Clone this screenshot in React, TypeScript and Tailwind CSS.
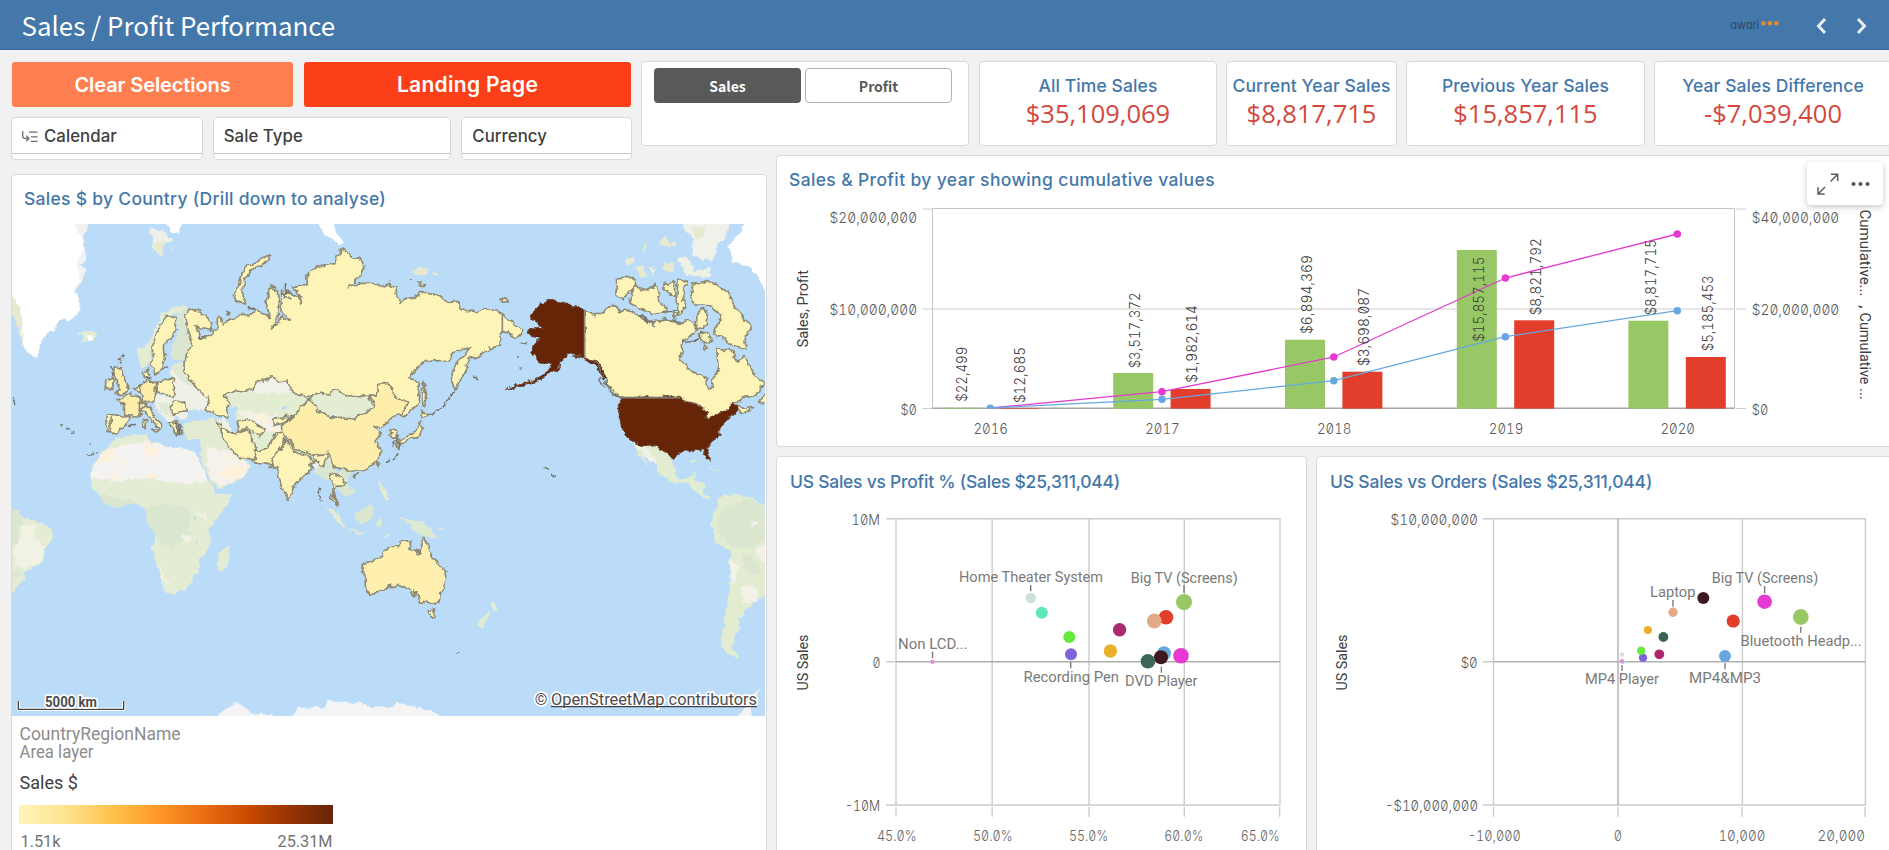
import React from "react";

const NUM = { fontFamily: "Inter, sans-serif", fontFeatureSettings: '"zero" 1, "tnum" 1' };
const LABEL = { fontFamily: "Roboto, sans-serif" };

type TProps = {
  x: number;
  y: number;
  w: number;
  s?: number;
  c?: string;
  rot?: number;
  num?: boolean;
  weight?: number;
  children: string;
};

/* Chart text: x is the left edge, y the baseline, w the drawn width. */
function T({ x, y, w, s = 14.7, c = "#595959", rot = 0, num = false, weight = 300, children }: TProps) {
  return (
    <text
      x={x}
      y={y}
      fontSize={s}
      fill={c}
      fontWeight={weight}
      textLength={w}
      lengthAdjust="spacingAndGlyphs"
      transform={rot ? `rotate(${rot} ${x} ${y})` : undefined}
      style={num ? NUM : LABEL}
    >
      {children}
    </text>
  );
}

const card = "rounded-[4px] border border-[#d9d9d9] bg-white";
const heading = "whitespace-nowrap font-['Inter'] font-medium text-[#4477aa]";

function Header() {
  return (
    <header className="flex h-[50px] shrink-0 items-center border-b border-[#38689a] bg-[#4477aa] pl-[21.5px] pr-[17px]">
      <h1 className="whitespace-nowrap font-['Noto_Sans_CJK_SC',sans-serif] text-[25.9px] font-normal leading-[48px] text-white">
        Sales / Profit Performance
      </h1>
      <svg className="ml-auto" width="50" height="20" viewBox="0 0 50 20">
        <text x="0.5" y="14" fontSize="12.5" fill="#27394f" textLength="28.5" lengthAdjust="spacingAndGlyphs" style={{ fontFamily: "Inter", fontWeight: 300 }}>
          ɑwɑri
        </text>
        <circle cx="33.5" cy="8.3" r="2.3" fill="#e58a2c" />
        <circle cx="40" cy="8.3" r="2.3" fill="#e58a2c" />
        <circle cx="46.3" cy="8.3" r="2.3" fill="#e58a2c" />
      </svg>
      <svg className="ml-[32px]" width="20" height="20" viewBox="0 0 20 20" fill="none" stroke="#e8edf3" strokeWidth="3">
        <path d="M13 4 L6.5 11 L13 18" />
      </svg>
      <svg className="ml-[20px]" width="20" height="20" viewBox="0 0 20 20" fill="none" stroke="#e8edf3" strokeWidth="3">
        <path d="M6 4 L12.5 11 L6 18" />
      </svg>
    </header>
  );
}

function Filter({ label, width, icon }: { label: string; width: string; icon?: boolean }) {
  return (
    <div className={`${card} ${width} flex h-[43px] flex-col`}>
      <div className="flex h-[36px] items-center border-b border-[#c4c4c4] pl-[10px]">
        {icon && (
          <svg className="mr-[6px] mt-[2px]" width="16" height="12" viewBox="0 0 16 12" fill="none" stroke="#6b6b6b" strokeWidth="1.3">
            <path d="M0.7 0 V4.5 Q0.7 7.5 3.5 7.5 H6 M4.2 4.6 L7 7.5 L4.2 10.4 M7 1.2 H15.5 M9 5.8 H15.5 M9 10.4 H15.5" />
          </svg>
        )}
        <span className="whitespace-nowrap pt-[3px] font-['Inter'] text-[16.8px] font-medium tracking-[0.05px] text-[#404040]">{label}</span>
      </div>
    </div>
  );
}

function Kpi({ title, value, width }: { title: string; value: string; width: string }) {
  return (
    <div className={`${card} ${width} flex h-[85px] shrink-0 flex-col items-center pt-[12px]`}>
      <div className={`${heading} text-[17.5px] leading-[24px] tracking-[0.1px]`}>{title}</div>
      <div className="whitespace-nowrap font-['Open_Sans'] text-[25.5px] leading-[31px] text-[#d4483d]">{value}</div>
    </div>
  );
}

const Y = "#fff4b8";
const O = "#feeeac";

const basemap: [string, string][] = [
  ["#ffffff", "M20 10 L272 10 L262 45 L245 65 L252 100 L262 125 L242 150 L262 170 L245 205 L225 225 L240 260 L235 300 L205 315 L178 318 L150 350 L128 368 L110 432 L90 415 L72 400 L60 350 L50 290 L20 235Z"],
  ["#f2f1f1", "M225 27 H270 L245 65 L252 100 L262 125 L242 150 L262 170 L245 205 L215 225 L238 200 L232 150 L248 110 L245 60Z"],
  ["#e8e9cf", "M30 235 L50 260 L66 300 L66 350 L72 400 L60 360 L30 270Z"],
  ["#eef0e8", "M450 40 L490 45 L515 75 L495 90 L480 130 L460 95Z"],
  ["#e8e9cf", "M460 85 L495 80 L480 130Z M515 90 L528 108 L516 100Z"],
  ["#ffffff", "M497 10 L547 10 L540 55 L515 58Z M952 10 L1000 10 L1010 60 L1035 80 L1015 92 L1000 70 L970 55Z"],
  ["#e3ecd2", "M230 352 L268 345 L294 358 L282 378 L250 380 L245 362Z"],
  ["#ffffff", "M262 362 L280 360 L282 375 L265 376Z"],
  ["#e3ecd2", "M410 405 L440 390 L465 340 L490 290 L550 268 L568 285 L510 300 L480 325 L455 390 L450 440 L430 458 L412 440Z"],
  ["#dae6d0", "M515 425 L520 390 L532 360 L528 300 L560 280 L578 390 L558 425 L525 435Z"],
  ["#eff1e6", "M455 535 L500 545 L525 535 L515 495 L512 455 L545 438 L570 480 L590 515 L635 545 L612 590 L585 578 L560 592 L560 610 L540 614 L520 600 L520 625 L545 655 L520 640 L490 605 L460 570Z"],
  ["#dfe9d3", "M512 455 L545 440 L565 480 L590 520 L560 510 L530 480Z M470 570 L510 560 L515 600 L495 600Z"],
  ["#e3ecd2", "M548 628 L580 615 L620 620 L645 612 L700 630 L760 660 L760 700 L715 715 L750 752 L735 785 L700 805 L652 822 L640 805 L610 755 L600 705 L605 672 L565 672 L550 650Z"],
  ["#f4f2ea", "M620 700 L690 710 L745 750 L735 785 L700 800 L655 815 L625 770Z"],
  ["#fdf1dc", "M660 775 L690 750 L745 755 L720 785 L670 795Z M680 715 L710 730 L690 735Z"],
  ["#e4edd3", "M330 690 L345 670 L385 662 L440 658 L445 675 L500 692 L530 705 L580 705 L590 720 L605 770 L630 800 L648 838 L695 833 L690 858 L655 905 L625 945 L632 990 L600 1035 L598 1065 L580 1085 L570 1110 L550 1130 L495 1138 L485 1100 L470 1050 L455 1000 L467 970 L460 950 L437 915 L440 880 L410 865 L350 875 L320 870 L290 835 L275 820 L275 770 L295 730 L320 695Z"],
  ["#f4f3f1", "M275 770 L300 725 L330 698 L440 678 L500 695 L585 710 L612 765 L625 795 L560 810 L480 795 L400 788 L340 800 L275 792Z"],
  ["#fdf1dc", "M280 750 L320 700 L350 710 L340 735 L290 745Z M350 730 L380 740 L370 750Z M430 685 L470 700 L480 725 L455 715 L460 745 L435 715Z M300 770 L365 790 L340 795Z M440 775 L480 780 L450 800Z M468 1045 L490 1080 L510 1100 L485 1095Z"],
  ["#dae6d0", "M440 880 L475 868 L540 870 L572 885 L560 960 L520 1000 L480 985 L460 950 L437 915Z M300 835 L345 850 L390 850 L410 865 L350 875 L310 865Z"],
  ["#f2f1e6", "M575 890 L610 895 L625 920 L600 900Z M540 965 L560 955 L575 975 L550 980Z M490 1085 L512 1100 L500 1112Z"],
  ["#badcf8", "M582 905 L592 902 L590 920 L582 918Z M560 945 L566 960 L562 965Z M592 968 L596 985 L592 985Z"],
  ["#e3ecd2", "M690 988 L688 1030 L670 1070 L652 1060 L655 1015Z"],
  ["#e4edd3", "M20 873 L60 885 L65 905 L125 922 L158 945 L158 970 L135 1000 L130 1045 L75 1070 L70 1095 L50 1120 L20 1155Z"],
  ["#f1f1e4", "M60 925 L110 930 L105 965 L135 1000 L125 1045 L80 1060 L45 1050 L40 1000 L65 970Z"],
  ["#dae6d0", "M20 873 L60 885 L70 920 L50 960 L55 990 L20 980Z M30 1065 L70 1075 L50 1090Z"],
  ["#e2edd2", "M675 535 L760 500 L820 484 L925 545 L885 600 L850 660 L820 690 L765 712 L745 650 L705 620 L705 590 L690 575 L672 560Z"],
  ["#f1f1e8", "M762 503 L815 487 L860 500 L880 535 L820 532 L780 540 L760 528Z M705 585 L760 590 L830 600 L845 640 L800 650 L745 612Z M655 612 L695 620 L700 650 L665 640Z"],
  ["#fdf1dc", "M760 600 L790 598 L810 625 L780 620Z M810 638 L845 640 L835 660Z"],
  ["#badcf8", "M682 582 L712 575 L706 600 L714 625 L720 648 L700 656 L686 630Z M838 582 L865 575 L850 590Z"],
  ["#e2edd3", "M930 545 L1000 522 L1050 545 L1105 540 L1125 570 L1060 615 L1000 608 L948 590Z M880 700 L930 722 L935 735 L885 715Z"],
  ["#f1f1ea", "M975 595 L1010 598 L1030 610 L1000 606Z"],
  ["#dae6d0", "M932 735 L990 712 L1005 765 L1050 768 L1042 800 L1065 832 L1045 845 L1020 830 L1000 805 L985 790 L965 795 L940 760Z"],
  ["#f1f1ea", "M932 735 L958 742 L950 765 L938 755Z"],
  ["#e3ecd2", "M975 873 L1000 880 L1042 940 L1020 930 L1000 905Z M1040 945 L1090 950 L1088 957 L1045 952Z M1128 920 L1145 910 L1140 940 L1130 930Z M1135 790 L1145 800 L1160 830 L1170 855 L1155 862 L1150 835Z M1155 965 L1180 955 L1160 972Z M875 853 L890 858 L884 868Z"],
  ["#dae6d0", "M1060 900 L1110 867 L1124 880 L1110 915 L1085 928Z"],
  ["#dee9d1", "M1190 905 L1215 912 L1270 922 L1290 945 L1315 968 L1280 962 L1250 955 L1230 930Z M1312 940 L1335 938 L1320 945Z"],
  ["#e3ecd2", "M1475 1160 L1492 1168 L1486 1190 L1474 1185Z M1425 1230 L1465 1190 L1470 1197 L1445 1238Z"],
  ["#f4f4f4", "M640 1510 L680 1480 L715 1463 L745 1490 L815 1500 L815 1515 L640 1515Z M870 1515 L895 1480 L975 1475 L985 1453 L1050 1465 L1080 1460 L1110 1480 L1170 1475 L1200 1465 L1290 1485 L1335 1515Z M2205 1515 L2235 1480 L2255 1440 L2287 1420 L2262 1452 L2250 1515Z"],
  ["#e2ecd1", "M2155 853 L2170 837 L2240 842 L2310 878 L2310 1137 L2270 1155 L2240 1185 L2215 1215 L2225 1235 L2205 1270 L2195 1300 L2218 1325 L2200 1328 L2175 1310 L2163 1280 L2170 1230 L2180 1180 L2190 1100 L2195 1040 L2190 1010 L2150 980 L2130 930 L2145 890Z"],
  ["#dae6d0", "M2160 890 L2240 850 L2310 878 L2310 960 L2260 1000 L2210 1000 L2165 970 L2145 930Z M2225 1010 L2270 1040 L2280 1080 L2240 1070Z"],
  ["#f3f1e8", "M2190 1035 L2215 1050 L2205 1110 L2192 1100Z M2225 1110 L2275 1120 L2270 1165 L2230 1160Z M2265 1000 L2310 985 L2310 1060 L2275 1030Z M2250 918 L2270 920 L2262 932Z"],
  ["#e2ecd1", "M1900 688 L1970 690 L1990 710 L2018 735 L2025 775 L2040 790 L2068 788 L2088 768 L2082 795 L2110 805 L2110 835 L2135 852 L2120 855 L2090 830 L2060 805 L2010 800 L1975 775 L1960 740 L1930 715 L1945 755 L1920 720Z M2060 735 L2095 740 L2080 745Z M2125 755 L2160 770 L2140 768Z"],
  ["#f1f2e8", "M1905 690 L1940 700 L1965 735 L1985 770 L1960 745Z"],
  ["#f1f1ec", "M2030 10 L2200 10 L2180 60 L2150 90 L2140 140 L2110 135 L2080 120 L2075 70Z"],
  ["#e8eacf", "M2075 40 L2110 30 L2120 60 L2090 80Z M1980 80 L1995 58 L2010 90 L1990 95Z M1868 140 L1905 120 L1890 150Z M1905 155 L1930 150 L1940 180 L1920 185Z M1985 145 L2020 140 L2020 170 L1990 172Z M1930 110 L1942 75 L1940 105Z M2010 85 L2030 85 L2025 95Z"],
  ["#eef1e4", "M2030 130 L2060 125 L2075 150 L2095 185 L2060 180 L2050 160Z M2075 170 L2130 160 L2130 185 L2080 185Z M1950 155 L1970 160 L1960 180Z"],
  ["#ffffff", "M2310 10 L2230 10 L2225 50 L2185 90 L2200 140 L2245 150 L2280 190 L2290 215 L2310 240Z"],
  ["#e6e9cd", "M1240 165 L1262 155 L1286 165 L1280 180 L1245 182Z M1295 170 L1322 178 L1300 182Z"],
];

const countries: [string, string][] = [
  [Y, "M557 300 L575 283 L600 288 L635 320 L632 345 L605 340 L583 332 L598 350 L600 372 L625 365 L640 345 L655 345 L655 310 L665 310 L668 330 L690 312 L730 300 L755 300 L765 285 L795 295 L808 308 L798 260 L812 222 L832 225 L835 270 L830 318 L818 338 L838 325 L845 300 L868 318 L860 298 L843 290 L845 225 L870 235 L895 245 L900 270 L902 245 L880 215 L922 205 L920 180 L950 155 L985 150 L1010 145 L1015 118 L1032 102 L1050 128 L1080 130 L1092 155 L1075 190 L1045 218 L1085 205 L1120 205 L1145 218 L1165 205 L1188 215 L1190 245 L1200 265 L1220 250 L1255 245 L1265 230 L1305 235 L1320 245 L1350 260 L1380 265 L1385 285 L1430 290 L1450 280 L1490 285 L1510 298 L1550 335 L1568 350 L1550 370 L1530 355 L1507 350 L1500 370 L1500 392 L1470 400 L1440 420 L1405 430 L1400 465 L1380 500 L1362 525 L1353 480 L1370 445 L1400 415 L1412 395 L1390 405 L1365 408 L1345 435 L1300 438 L1270 440 L1225 490 L1258 500 L1255 565 L1215 605 L1205 597 L1225 562 L1190 550 L1165 505 L1140 508 L1130 540 L1105 540 L1075 545 L1050 545 L1020 530 L995 525 L990 540 L960 535 L925 550 L910 540 L880 535 L860 495 L845 500 L815 485 L765 503 L760 525 L720 530 L705 525 L675 540 L685 560 L680 580 L680 612 L655 600 L615 582 L630 550 L585 515 L565 480 L552 470 L553 430 L575 390 L565 355Z"],
  [Y, "M700 240 L720 200 L735 160 L770 140 L805 120 L808 135 L765 160 L735 190 L725 230 L738 268 L710 260Z"],
  [Y, "M1270 500 L1275 530 L1280 550 L1270 572 L1266 540Z M680 292 L692 292 L686 300Z M1500 255 L1512 248 L1522 258 L1505 262Z M1255 200 L1278 210 L1262 214Z M815 213 L828 215 L820 218Z"],
  [Y, "M455 395 L480 330 L505 298 L527 310 L525 350 L490 395 L493 430 L480 470 L465 480 L452 445 L460 420Z"],
  [O, "M345 450 L358 455 L362 470 L375 495 L387 520 L375 535 L345 535 L358 520 L350 500 L345 480Z"],
  [Y, "M318 495 L340 490 L338 520 L315 525Z M470 500 L520 490 L525 535 L515 545 L472 530Z M510 575 L525 558 L553 562 L563 590 L520 595Z"],
  [O, "M350 555 L390 535 L425 555 L415 575 L422 603 L375 602 L372 570Z"],
  [Y, "M322 600 L335 598 L390 608 L375 635 L345 657 L325 652 L320 625Z M335 605 L330 650"],
  [O, "M422 510 L445 495 L470 500 L468 535 L460 560 L430 560 L420 530Z"],
  [Y, "M430 470 L445 463 L445 490 L433 490Z M400 522 L420 506 L418 530Z M415 565 L440 565 L438 580 L418 580Z M420 585 L450 575 L460 605 L485 630 L480 645 L455 615 L435 595Z M430 615 L440 612 L438 637 L430 635Z M455 645 L475 645 L470 656Z"],
  [Y, "M506 625 L530 618 L535 635 L548 660 L525 655 L520 640Z"],
  [Y, "M652 618 L668 628 L665 640 L700 658 L745 645 L765 700 L770 738 L720 725 L700 710 L680 690 L665 660Z"],
  [Y, "M710 622 L745 608 L795 645 L780 665 L745 640 L715 650Z M820 610 L880 602 L850 625 L820 632Z"],
  [Y, "M765 710 L800 700 L830 655 L855 655 L850 690 L815 735 L820 755 L770 740Z"],
  [Y, "M855 670 L875 695 L885 710 L930 730 L945 740 L930 742 L935 765 L885 805 L880 835 L865 852 L845 820 L832 760 L820 755 L815 730 L845 700Z M940 722 L985 712 L968 755 L950 738Z"],
  [O, "M845 635 L885 600 L925 552 L945 570 L950 590 L1000 605 L1060 612 L1110 585 L1125 570 L1105 545 L1132 540 L1130 510 L1165 505 L1190 550 L1225 562 L1205 597 L1180 605 L1150 630 L1120 637 L1145 655 L1128 675 L1142 705 L1130 740 L1090 765 L1040 765 L1000 755 L985 715 L930 722 L885 700 L860 665 L845 655Z"],
  [Y, "M990 780 L1005 773 L1040 805 L1008 815 L1000 845 L1015 865 L995 855 L1000 815Z"],
  [Y, "M1172 645 L1185 643 L1190 668 L1175 670Z M1133 740 L1140 742 L1134 758Z M1060 778 L1072 776 L1066 785Z"],
  [O, "M1265 588 L1288 598 L1262 612Z M1258 620 L1268 640 L1260 662 L1215 682 L1195 682 L1190 675 L1235 660 L1250 645Z M1190 685 L1205 690 L1195 702Z"],
  ["#fff0b0", "M1090 1045 L1140 1030 L1150 1010 L1175 990 L1195 995 L1200 980 L1235 977 L1230 1000 L1260 1015 L1265 990 L1270 963 L1285 995 L1295 1025 L1320 1050 L1338 1070 L1340 1090 L1320 1140 L1318 1160 L1290 1167 L1260 1160 L1245 1130 L1240 1145 L1215 1112 L1170 1115 L1110 1138 L1100 1130 L1098 1090 L1088 1070Z M1285 1185 L1307 1182 L1302 1207 L1293 1205Z"],
  [Y, "M1752 285 L1780 300 L1800 295 L1840 270 L1860 290 L1880 285 L1915 300 L1935 310 L1960 320 L2000 315 L2040 325 L2065 315 L2085 325 L2090 345 L2075 355 L2050 380 L2040 430 L2070 465 L2120 490 L2124 522 L2137 520 L2139 490 L2155 470 L2150 400 L2195 405 L2214 440 L2234 425 L2256 470 L2292 505 L2278 535 L2235 547 L2205 565 L2175 590 L2120 612 L2118 590 L2100 568 L2040 555 L2040 548 L1870 548 L1840 535 L1822 510 L1818 480 L1790 440 L1752 428Z"],
  [Y, "M2272 562 L2294 538 L2312 545 L2312 564Z M2208 575 L2258 578 L2225 598Z M1850 188 L1900 188 L1908 210 L1870 255 L1848 240Z M1902 215 L1945 225 L1968 208 L1980 260 L2005 290 L1960 300 L1890 265Z M1995 205 L2022 198 L2025 245 L1995 225Z M2035 195 L2062 195 L2050 240 L2055 280 L2035 300 L2030 240Z M2075 210 L2100 200 L2150 205 L2186 235 L2206 280 L2256 335 L2236 365 L2236 405 L2180 378 L2145 360 L2155 320 L2165 300 L2120 270 L2085 270 L2072 235Z M2090 300 L2110 280 L2125 300 L2110 340 L2090 345Z M2095 360 L2120 350 L2135 380 L2100 380Z M2020 290 L2035 300 L2022 310Z M2110 390 L2122 398 L2112 404Z"],
];

const usShapes =
  "M1752 283 L1695 265 L1655 253 L1620 265 L1605 290 L1588 303 L1610 325 L1625 340 L1590 342 L1585 352 L1600 365 L1625 370 L1600 390 L1592 410 L1610 430 L1620 445 L1655 445 L1640 475 L1600 495 L1515 523 L1560 515 L1630 488 L1665 465 L1672 458 L1680 440 L1692 430 L1700 415 L1720 420 L1752 428Z M1752 426 L1792 438 L1822 485 L1810 492 L1785 455Z M1865 550 L2038 548 L2060 560 L2100 570 L2120 590 L2118 612 L2145 600 L2175 590 L2200 565 L2212 580 L2210 590 L2180 615 L2160 640 L2160 660 L2128 690 L2120 700 L2132 735 L2122 735 L2110 705 L2060 708 L2035 715 L2020 734 L2000 712 L1985 708 L1970 692 L1930 695 L1900 685 L1875 660 L1858 620 L1858 560Z M1662 468 L1682 450 L1675 470Z";

function WorldMap() {
  return (
    <svg className="block" width="753" height="492" viewBox="36 27 2259 1476">
      <defs>
        <filter id="coast" x="0" y="0" width="2330" height="1530" filterUnits="userSpaceOnUse" colorInterpolationFilters="sRGB">
          <feTurbulence type="fractalNoise" baseFrequency="0.045" numOctaves="3" seed="7" result="n" />
          <feDisplacementMap in="SourceGraphic" in2="n" scale="20" xChannelSelector="R" yChannelSelector="G" />
        </filter>
      </defs>
      <rect x="36" y="27" width="2259" height="1476" fill="#badcf8" />
      <g filter="url(#coast)">
        {basemap.map(([fill, d], i) => (
          <path key={i} d={d} fill={fill} />
        ))}
        <g stroke="#8d8972" strokeWidth="5" strokeLinejoin="round">
          {countries.map(([fill, d], i) => (
            <path key={i} d={d} fill={fill} />
          ))}
          <path d={usShapes} fill="#662506" stroke="#6d4a38" strokeWidth="3" />
        </g>
        <g fill="none" stroke="#75766d" strokeWidth="5" strokeLinecap="round">
          <path d="M1292 600 L1330 575 L1345 555 L1362 530" strokeDasharray="14 7" />
          <path d="M335 455 L345 465 M340 470 L342 485 M358 440 L362 436 M370 428 L372 420 M440 485 L450 488 M488 462 L498 456 M525 625 L545 632 M535 640 L548 650 M540 628 L530 660 M528 632 L540 660" />
          <path d="M850 212 L860 232 L856 250 M862 225 L880 240 M848 235 L870 250 M600 365 L615 372 M745 275 L760 285" />
          <path d="M183 632 H186 M197 640 L207 642 M218 650 H221 M271 685 H273 M262 720 L278 718 M287 716 L292 714 M385 636 L405 628 M38 545 L44 568" />
          <path d="M958 820 V835 M960 842 V850 M966 858 V860 M1630 760 L1645 766 M1655 775 L1662 782 M1558 382 L1576 386 M1550 424 H1554 M1418 486 L1430 490 M1566 462 H1568 M1180 735 L1190 720 M1232 195 L1236 198 M1198 678 L1200 700 M1180 690 L1195 660 M1160 742 L1168 738 M1374 1315 H1376" />
          <path d="M1785 440 L1812 485 M1800 490 L1812 515 M1815 500 L1825 520 L1860 550" />
          <path d="M1915 300 L1955 322 L1960 335 M1990 310 L2040 320 M2070 380 L2095 375 L2110 350 M1985 290 L2030 285 M2050 375 L2070 382" strokeWidth="4" />
        </g>
      </g>
      <path d="M1752 287 H1746 V426 H1752Z M1868 549 V556 H2036 V549Z" fill="#662506" />
      <path d="M1507 297 V352 M1754 287 V428" stroke="#8a8a80" strokeWidth="5" fill="none" />
      <path d="M1866 548 H2040" stroke="#7b7465" strokeWidth="6" />
      <g style={LABEL} stroke="#ffffff" strokeWidth="10" paintOrder="stroke" strokeLinejoin="round" fill="#4d4d4d">
        <path d="M55 1458 V1483 H371 V1458" fill="none" />
        <path d="M55 1458 V1483 H371 V1458" fill="none" stroke="#404040" strokeWidth="4" />
        <text x="135" y="1476" fontSize="42" fontWeight="700" textLength="156" lengthAdjust="spacingAndGlyphs">5000 km</text>
        <text x="1604" y="1469" fontSize="48" textLength="38" lengthAdjust="spacingAndGlyphs">©</text>
        <text x="1653" y="1469" fontSize="48" textLength="618" lengthAdjust="spacingAndGlyphs">OpenStreetMap contributors</text>
        <path d="M1653 1475 H2271" stroke="#404040" strokeWidth="3.5" />
      </g>
    </svg>
  );
}

function MapCard() {
  return (
    <section className={`${card} mt-[19px] h-[720px] w-[756px] shrink-0`}>
      <h2 className={`${heading} h-[49px] pl-[12px] pt-[11px] text-[17.5px] leading-[26px] tracking-[0.28px]`}>
        Sales $ by Country (Drill down to analyse)
      </h2>
      <WorldMap />
      <svg className="block" width="340" height="140" viewBox="12 716 340 140">
        <defs>
          <linearGradient id="ramp">
            <stop offset="0" stopColor="#fff5b8" />
            <stop offset="0.15" stopColor="#fee391" />
            <stop offset="0.29" stopColor="#fec44f" />
            <stop offset="0.44" stopColor="#fe9929" />
            <stop offset="0.58" stopColor="#ec7014" />
            <stop offset="0.72" stopColor="#cc4c02" />
            <stop offset="0.86" stopColor="#993404" />
            <stop offset="1" stopColor="#662506" />
          </linearGradient>
        </defs>
        <T x={19.5} y={740} w={161} s={18} c="#8c8c8c" weight={400}>CountryRegionName</T>
        <T x={19.5} y={758} w={74} s={18} c="#8c8c8c" weight={400}>Area layer</T>
        <T x={19.5} y={789} w={58.5} s={18.5} c="#404040" weight={400}>Sales $</T>
        <rect x="19" y="805" width="314" height="19" fill="url(#ramp)" />
        <T x={20.5} y={846.7} w={40} s={17} c="#737373" weight={400}>1.51k</T>
        <T x={277.5} y={846.7} w={55} s={17} c="#737373" weight={400}>25.31M</T>
      </svg>
    </section>
  );
}

const bars = [
  { year: "2016", x: 941.5, s: 407.8, p: 407.9 },
  { year: "2017", x: 1113.2, s: 373, p: 389 },
  { year: "2018", x: 1285, s: 339.7, p: 371.7 },
  { year: "2019", x: 1456.8, s: 250, p: 320.3 },
  { year: "2020", x: 1628.4, s: 320.7, p: 357 },
];
const cumulativeSales = [[990.3, 408], [1162, 391.7], [1333.8, 357], [1505.4, 278], [1677.3, 234]];
const cumulativeProfit = [[990.3, 408], [1162, 399.3], [1333.8, 380.7], [1505.4, 336.7], [1677.3, 310.7]];
const barLabels: [string, number, number, number][] = [
  ["$22,499", 967.5, 401.7, 55],
  ["$12,685", 1025, 403, 56],
  ["$3,517,372", 1139.6, 368.3, 76],
  ["$1,982,614", 1196.8, 382.7, 77.5],
  ["$6,894,369", 1311.8, 334, 79],
  ["$3,698,087", 1368.6, 366, 78],
  ["$15,857,115", 1484, 341.7, 85],
  ["$8,821,792", 1540.6, 315.3, 77],
  ["$8,817,715", 1655.6, 315.3, 76],
  ["$5,185,453", 1713, 351.3, 76],
];

function ComboChart() {
  return (
    <section className={`${card} relative h-[292px] w-[1130px] shrink-0`}>
      <h2 className={`${heading} h-[45px] pl-[12px] pt-[11px] text-[17.5px] leading-[26px] tracking-[0.36px]`}>
        Sales &amp; Profit by year showing cumulative values
      </h2>
      <svg className="block" width="1111" height="245" viewBox="777 201 1111 245">
        <g stroke="#cccccc" fill="none">
          <path d="M922.5 209 H932.5 M922.5 309 H932.5 M922.5 408.5 H932.5 M1736 209 H1746 M1736 309 H1746 M1736 408.5 H1746" />
          <path d="M932.5 309 H1734.5" />
          <path d="M932.5 408 V208.5 H1734.5 V408" stroke="#c4c4c4" />
          <path d="M932.5 408.3 H1734.5" stroke="#a6a6a6" strokeWidth="1.5" />
        </g>
        {bars.map((b) => (
          <g key={b.year}>
            <rect x={b.x} y={b.s} width="40" height={408.6 - b.s} fill="#98c866" />
            <rect x={b.x + 57.4} y={b.p} width="40" height={408.6 - b.p} fill="#e23e2b" />
            <T x={b.x + 32} y={434} w={34.5} num>{b.year}</T>
          </g>
        ))}
        <polyline points={cumulativeSales.join(" ")} fill="none" stroke="#e539d1" strokeWidth="1.3" />
        <polyline points={cumulativeProfit.join(" ")} fill="none" stroke="#66a8de" strokeWidth="1.3" />
        {cumulativeSales.slice(1).map(([x, y]) => (
          <circle key={x} cx={x} cy={y} r="3.8" fill="#e539d1" />
        ))}
        {cumulativeProfit.slice(1).map(([x, y]) => (
          <circle key={x} cx={x} cy={y} r="3.8" fill="#66a8de" />
        ))}
        <path d="M986.5 408.3 A3.8 3.8 0 0 1 994.1 408.3Z" fill="#66a8de" />
        {barLabels.map(([label, x, y, w]) => (
          <T key={label} x={x} y={y} w={w} s={15} rot={-90} c="#404040" num>{label}</T>
        ))}
        <T x={829.6} y={222.7} w={87.5} num>$20,000,000</T>
        <T x={829.6} y={315} w={87.5} num>$10,000,000</T>
        <T x={900.4} y={415} w={16.5} num>$0</T>
        <T x={1751.8} y={222.7} w={87.5} num>$40,000,000</T>
        <T x={1751.8} y={315} w={87.5} num>$20,000,000</T>
        <T x={1751.8} y={415} w={16.5} num>$0</T>
        <T x={808} y={347.5} w={77.5} s={15} rot={-90} c="#404040" weight={400}>Sales, Profit</T>
        <T x={1860} y={209.5} w={87} s={15} rot={90} c="#404040" weight={400}>Cumulative...</T>
        <T x={1860} y={305} w={4} s={15} rot={90} c="#404040" weight={400}>,</T>
        <T x={1860} y={312.5} w={87} s={15} rot={90} c="#404040" weight={400}>Cumulative ...</T>
      </svg>
      <div className="absolute left-[1029.5px] top-[6px] flex h-[43px] w-[76px] items-center rounded-[4px] bg-white pl-[10px] shadow-[0_2px_6px_rgba(0,0,0,0.22)]">
        <svg width="54" height="22" viewBox="0 0 54 22" fill="none" stroke="#5c5c5c" strokeWidth="1.5">
          <path d="M13.5 8.5 L20.5 1.5 M14 1.3 H20.7 V8 M8 14 L1 21 M1 14.3 V21 H7.7" />
          <g fill="#5c5c5c" stroke="none">
            <circle cx="36.5" cy="11" r="2.1" />
            <circle cx="43.5" cy="11" r="2.1" />
            <circle cx="50.5" cy="11" r="2.1" />
          </g>
        </svg>
      </div>
    </section>
  );
}

type Bubble = [number, number, number, string];
type Tag = [string, number, number, number];
type Leader = [number, number, number];

const profitBubbles: Bubble[] = [
  [1030.7, 598, 5.3, "#cfdfda"], [1041.8, 612.7, 6, "#5de6bb"], [1069.3, 637, 6, "#66eb3c"], [1071, 654.3, 6, "#7f63db"],
  [1110.4, 651, 6.7, "#eab02c"], [1119.6, 629.7, 6.7, "#a9296b"], [1164, 653.3, 7, "#66a8de"], [1161, 657.3, 7, "#3e1a20"],
  [1147.9, 661.3, 7.3, "#3b6657"], [1181, 655.8, 7.8, "#e539d1"], [1184, 602, 8, "#98c866"], [1166, 617.3, 7.3, "#e23e2b"],
  [1154.3, 621, 7.4, "#e4aa87"], [932.5, 661.7, 2.2, "#d990dd"],
];
const profitTags: Tag[] = [
  ["Home Theater System", 959, 582.3, 144], ["Big TV (Screens)", 1130.7, 583.3, 107], ["Non LCD...", 898, 649, 69.5],
  ["Recording Pen", 1023.5, 681.7, 95.5], ["DVD Player", 1125, 686, 72.5],
];
const profitLeaders: Leader[] = [[1030.7, 585, 591.3], [1184, 585, 592.7], [932.5, 651.7, 658], [1070.7, 662, 668.3], [1161.4, 666.7, 672.7]];

const orderBubbles: Bubble[] = [
  [1703.3, 598, 6, "#3e1a20"], [1673, 612.3, 4.7, "#e4aa87"], [1764.6, 601.7, 7.3, "#e539d1"], [1800.8, 617, 7.9, "#98c866"],
  [1733.2, 621, 6.6, "#e23e2b"], [1647.9, 630, 4.1, "#eab02c"], [1663.4, 637, 4.9, "#3b6657"], [1643, 657.7, 4.2, "#7f63db"],
  [1641.2, 650.7, 4.2, "#66eb3c"], [1659.3, 654.3, 4.9, "#a9296b"], [1725, 656, 6, "#66a8de"], [1622, 654.5, 2.2, "#cfdfda"],
  [1623.6, 662, 2, "#a9eedb"], [1622, 661.3, 2.3, "#e08fd9"],
];
const orderTags: Tag[] = [
  ["Laptop", 1650, 597.3, 45.5], ["Big TV (Screens)", 1711.8, 583.3, 106.5], ["Bluetooth Headp...", 1740.6, 646, 121],
  ["MP4 Player", 1585, 684, 74], ["MP4&MP3", 1689, 682.7, 72],
];
const orderLeaders: Leader[] = [[1673, 600, 606.7], [1764.6, 586, 593.3], [1800.8, 626.7, 632.7], [1622, 665, 671], [1725, 663.3, 669.3]];

function Marks({ bubbles, tags, leaders }: { bubbles: Bubble[]; tags: Tag[]; leaders: Leader[] }) {
  return (
    <>
      {bubbles.map(([x, y, r, fill], i) => (
        <circle key={i} cx={x} cy={y} r={r} fill={fill} />
      ))}
      {leaders.map(([x, a, b]) => (
        <path key={x} d={`M${x} ${a} V${b}`} stroke="#7a7a7a" strokeWidth="1.4" />
      ))}
      {tags.map(([label, x, y, w]) => (
        <T key={label} x={x} y={y} w={w} s={15.2} c="#7a7a7a" weight={400}>{label}</T>
      ))}
    </>
  );
}

function ProfitScatter() {
  return (
    <section className={`${card} h-[420px] w-[531px] shrink-0`}>
      <h2 className={`${heading} h-[45px] pl-[13px] pt-[12px] text-[17.5px] leading-[26px] tracking-[-0.25px]`}>
        US Sales vs Profit % (Sales $25,311,044)
      </h2>
      <svg className="block" width="529" height="348" viewBox="777 502 529 348">
        <g stroke="#cccccc" strokeWidth="1.4" fill="none">
          <path d="M886 518.7 H1280.3 M886 661.7 H896 M886 805 H1280.3" />
          <path d="M896 518.7 V805 M992.2 518.7 V805 M1089 518.7 V805 M1184.3 518.7 V805 M1280 518.7 V805" />
          <path d="M896 807 V816.7 M992.2 807 V816.7 M1089 807 V816.7 M1184.3 807 V816.7 M1279.6 807 V816.7" />
          <path d="M896 661.7 H1280" stroke="#adadad" />
        </g>
        <T x={851.5} y={525} w={28.5} num>10M</T>
        <T x={872.5} y={668.3} w={8} num>0</T>
        <T x={845} y={811} w={35} num>-10M</T>
        <T x={877} y={841.3} w={39.5} num c="#666666">45.0%</T>
        <T x={973} y={841.3} w={39.5} num c="#666666">50.0%</T>
        <T x={1069} y={841.3} w={39} num c="#666666">55.0%</T>
        <T x={1164.3} y={841.3} w={39} num c="#666666">60.0%</T>
        <T x={1240.7} y={841.3} w={39} num c="#666666">65.0%</T>
        <T x={807.5} y={690.5} w={56} s={15} rot={-90} c="#404040" weight={400}>US Sales</T>
        <Marks bubbles={profitBubbles} tags={profitTags} leaders={profitLeaders} />
      </svg>
    </section>
  );
}

function OrdersScatter() {
  return (
    <section className={`${card} h-[420px] w-[590px] shrink-0`}>
      <h2 className={`${heading} h-[45px] pl-[13px] pt-[12px] text-[17.5px] leading-[26px] tracking-[-0.2px]`}>
        US Sales vs Orders (Sales $25,311,044)
      </h2>
      <svg className="block" width="572" height="348" viewBox="1317 502 572 348">
        <g stroke="#cccccc" strokeWidth="1.4" fill="none">
          <path d="M1483 518.7 H1866 M1483 661.7 H1493 M1483 805 H1866" />
          <path d="M1493.5 518.7 V805 M1742.4 518.7 V805 M1865.4 518.7 V805" />
          <path d="M1493.5 807 V816.7 M1618 807 V816.7 M1742 807 V816.7 M1865 807 V816.7" />
          <path d="M1493.5 661.7 H1865.4 M1618 518.7 V805" stroke="#b0b0b0" />
        </g>
        <T x={1390.5} y={525} w={87.5} num>$10,000,000</T>
        <T x={1460.7} y={668.3} w={17} num>$0</T>
        <T x={1385} y={811} w={93} num>-$10,000,000</T>
        <T x={1467.7} y={841.3} w={53} num c="#666666">-10,000</T>
        <T x={1613.8} y={841.3} w={8.2} num c="#666666">0</T>
        <T x={1718.4} y={841.3} w={47} num c="#666666">10,000</T>
        <T x={1817.5} y={841.3} w={47.5} num c="#666666">20,000</T>
        <T x={1347} y={690.5} w={56} s={15} rot={-90} c="#404040" weight={400}>US Sales</T>
        <Marks bubbles={orderBubbles} tags={orderTags} leaders={orderLeaders} />
      </svg>
    </section>
  );
}

export default function App() {
  return (
    <div className="flex h-[850px] w-[1889px] flex-col overflow-hidden bg-[#f1f1f1]">
      <Header />
      <div className="flex h-[105px] shrink-0 items-start pl-[11px] pt-[11px]">
        <div className="flex w-[621px] shrink-0 flex-col gap-[10px] pt-[1px]">
          <div className="flex gap-[11px] pl-[1px]">
            <button className="h-[45px] w-[281px] rounded-[3px] bg-[#ff7f50] pt-[1px] font-['Inter'] text-[20px] font-semibold tracking-[-0.1px] text-white">
              Clear Selections
            </button>
            <button className="h-[45px] w-[327px] rounded-[3px] bg-[#fb4019] pt-[1px] font-['Inter'] text-[21px] font-semibold tracking-[0.3px] text-white">
              Landing Page
            </button>
          </div>
          <div className="flex gap-[10px]">
            <Filter label="Calendar" width="w-[192px]" icon />
            <Filter label="Sale Type" width="w-[239px]" />
            <Filter label="Currency" width="w-[171px]" />
          </div>
        </div>
        <div className={`${card} ml-[9px] flex h-[85px] w-[328px] shrink-0 gap-[4px] pl-[12px] pt-[6px] font-['Noto_Sans_CJK_SC',sans-serif] text-[14px] font-bold`}>
          <button className="h-[35px] w-[147px] rounded-[4px] bg-[#595959] leading-[36px] text-white">Sales</button>
          <button className="h-[35px] w-[147px] rounded-[4px] border border-[#b3b3b3] leading-[34px] text-[#595959]">Profit</button>
        </div>
        <div className="ml-[10px] flex shrink-0 gap-[9px]">
          <Kpi title="All Time Sales" value="$35,109,069" width="w-[238px]" />
          <Kpi title="Current Year Sales" value="$8,817,715" width="w-[171px]" />
          <Kpi title="Previous Year Sales" value="$15,857,115" width="w-[239px]" />
          <Kpi title="Year Sales Difference" value="-$7,039,400" width="w-[238px]" />
        </div>
      </div>
      <div className="flex flex-1 items-start gap-[9px] pl-[11px]">
        <MapCard />
        <div className="flex flex-col gap-[9px]">
          <ComboChart />
          <div className="flex gap-[9px]">
            <ProfitScatter />
            <OrdersScatter />
          </div>
        </div>
      </div>
    </div>
  );
}
